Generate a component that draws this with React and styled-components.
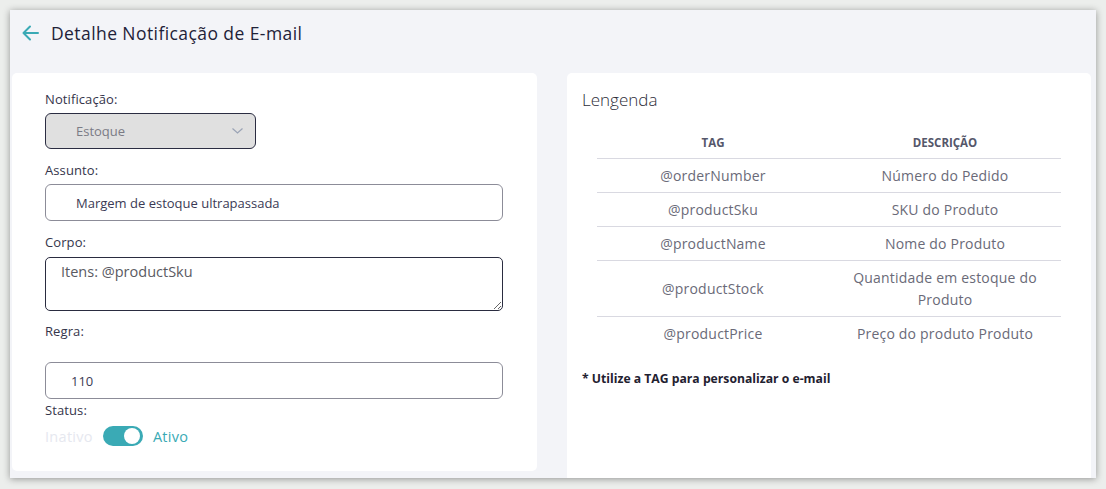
import React from "react";
import styled, { createGlobalStyle } from "styled-components";

const Global = createGlobalStyle`
  html, body { margin: 0; padding: 0; }
  body {
    background: #eceeec;
    font-family: "Open Sans", "Noto Sans", sans-serif;
    width: 1106px;
    height: 489px;
    overflow: hidden;
  }
  * { box-sizing: border-box; }
`;

const Frame = styled.div`
  margin: 10px;
  width: 1086px;
  height: 468px;
  background: #f3f4f8;
  box-shadow: 0 1px 7px rgba(0, 0, 0, 0.38);
  overflow: hidden;
  display: flex;
  flex-direction: column;
`;

const Header = styled.header`
  flex: none;
  height: 63px;
  display: flex;
  align-items: center;
  gap: 12px;
  padding: 0 0 17px 11px;
`;

const BackButton = styled.button`
  border: none;
  background: none;
  padding: 0;
  width: 18px;
  height: 18px;
  display: flex;
  align-items: center;
  justify-content: center;
  color: #3aaab5;
  cursor: pointer;
`;

const Title = styled.h1`
  margin: 0;
  font-size: 17.5px;
  font-weight: 400;
  color: #1f2238;
  letter-spacing: 0.42px;
`;

const Columns = styled.div`
  flex: none;
  display: grid;
  grid-template-columns: 525px 524px;
  column-gap: 30px;
  padding: 0 5px 0 2px;
  align-items: start;
`;

const Card = styled.section`
  background: #fff;
  border-radius: 5px;
  height: ${(p) => p.$h}px;
  padding: ${(p) => p.$pad};
`;

const Label = styled.div`
  font-size: 13px;
  line-height: 18px;
  color: #35354b;
  letter-spacing: 0.1px;
  margin-top: ${(p) => p.$mt || 0}px;
`;

const Select = styled.div`
  margin-top: 5px;
  width: 211px;
  height: 36px;
  background: #e0e0e0;
  border: 1px solid #2b2d42;
  border-radius: 6px;
  display: flex;
  align-items: center;
  justify-content: space-between;
  padding: 0 12px 0 30px;
  font-size: 13px;
  color: #7b7b85;
`;

const Input = styled.div`
  margin-top: ${(p) => p.$mt}px;
  height: 37px;
  border: 1px solid #8c8c98;
  border-radius: 6px;
  display: flex;
  align-items: center;
  padding-left: ${(p) => p.$pl}px;
  font-size: 13px;
  color: #3b3a55;
`;

const TextArea = styled.textarea`
  display: block;
  margin-top: 6px;
  width: 100%;
  height: 54px;
  border: 1px solid #2a2c40;
  border-radius: 5px;
  padding: 4px 15px;
  font-family: inherit;
  font-size: 14.5px;
  line-height: 20px;
  color: #5a5a62;
  resize: vertical;
  outline: none;
`;

const ToggleRow = styled.div`
  margin-top: 5px;
  height: 24px;
  display: flex;
  align-items: center;
  gap: 10px;
  font-size: 14.5px;
  letter-spacing: 0.3px;
`;

const ToggleText = styled.span`
  color: ${(p) => p.$c};
`;

const Switch = styled.span`
  position: relative;
  width: 40px;
  height: 20px;
  border-radius: 10px;
  background: #3aaab5;
  &::after {
    content: "";
    position: absolute;
    top: 2px;
    right: 3px;
    width: 16px;
    height: 16px;
    border-radius: 50%;
    background: #fff;
  }
`;

const Legend = styled.h2`
  margin: 0;
  font-size: 17px;
  font-weight: 300;
  line-height: 22px;
  color: #2c2c38;
`;

const Table = styled.table`
  margin: 18px 0 0 15px;
  width: 464px;
  border-collapse: collapse;
  table-layout: fixed;
`;

const Th = styled.th`
  height: 29px;
  padding: 0 0 2px;
  font-size: 11.5px;
  font-weight: 700;
  color: #55576a;
  text-align: center;
  vertical-align: middle;
`;

const Td = styled.td`
  border-top: 1px solid #d9d9e1;
  padding: 6px 6px 5px;
  font-size: 14px;
  line-height: 22px;
  letter-spacing: 0.2px;
  color: #6a6a78;
  text-align: center;
  vertical-align: middle;
`;

const Note = styled.p`
  margin: 19px 0 0;
  font-size: 12.2px;
  font-weight: 700;
  line-height: 20px;
  color: #1f2130;
`;

const rows = [
  ["@orderNumber", "Número do Pedido"],
  ["@productSku", "SKU do Produto"],
  ["@productName", "Nome do Produto"],
  ["@productStock", "Quantidade em estoque do Produto"],
  ["@productPrice", "Preço do produto Produto"],
];

export default function App() {
  return (
    <>
      <Global />
      <Frame>
        <Header>
          <BackButton aria-label="Voltar">
            <svg width="17" height="16" viewBox="0 0 17 16" fill="none" stroke="currentColor" strokeWidth="2" strokeLinecap="round" strokeLinejoin="round">
              <path d="M16 8H1.5M8 1.5L1.5 8L8 14.5" />
            </svg>
          </BackButton>
          <Title>Detalhe Notificação de E-mail</Title>
        </Header>
        <Columns>
          <Card $h={398} $pad="17px 34px 0 33px">
            <Label>Notificação:</Label>
            <Select>
              <span>Estoque</span>
              <svg width="11" height="6" viewBox="0 0 11 6" fill="none" stroke="#9aa3b5" strokeWidth="1.2">
                <path d="M0.5 0.5L5.5 5L10.5 0.5" />
              </svg>
            </Select>
            <Label $mt={12}>Assunto:</Label>
            <Input $mt={5} $pl={30}>Margem de estoque ultrapassada</Input>
            <Label $mt={12}>Corpo:</Label>
            <TextArea defaultValue="Itens: @productSku" />
            <Label $mt={11}>Regra:</Label>
            <Input $mt={22} $pl={25}>110</Input>
            <Label $mt={2}>Status:</Label>
            <ToggleRow>
              <ToggleText $c="#e6e8ef">Inativo</ToggleText>
              <Switch />
              <ToggleText $c="#3aaab5">Ativo</ToggleText>
            </ToggleRow>
          </Card>
          <Card $h={420} $pad="16px 15px 0 15px">
            <Legend>Lengenda</Legend>
            <Table>
              <thead>
                <tr>
                  <Th>TAG</Th>
                  <Th>DESCRIÇÃO</Th>
                </tr>
              </thead>
              <tbody>
                {rows.map(([tag, desc]) => (
                  <tr key={tag}>
                    <Td>{tag}</Td>
                    <Td>{desc}</Td>
                  </tr>
                ))}
              </tbody>
            </Table>
            <Note>* Utilize a TAG para personalizar o e-mail</Note>
          </Card>
        </Columns>
      </Frame>
    </>
  );
}
